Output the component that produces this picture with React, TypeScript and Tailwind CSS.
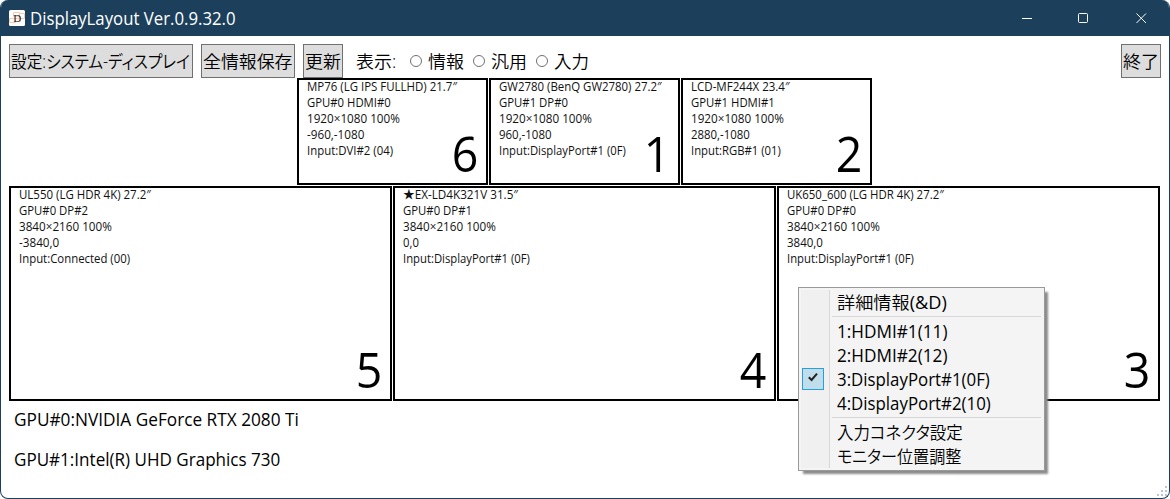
import { useLayoutEffect, useRef, useState } from "react";
import type { ReactNode } from "react";

/** Text condensed or stretched horizontally to an exact width in pixels. */
function Fit({ w, children, className = "" }: { w: number; children: ReactNode; className?: string }) {
  const ref = useRef<HTMLSpanElement>(null);
  const [scale, setScale] = useState(1);
  useLayoutEffect(() => {
    const natural = ref.current?.offsetWidth;
    if (natural) setScale(w / natural);
  }, [w]);
  return (
    <span className={`block ${className}`} style={{ width: w }}>
      <span ref={ref} className="inline-block origin-left whitespace-nowrap align-top" style={{ transform: `scaleX(${scale})` }}>
        {children}
      </span>
    </span>
  );
}

type Line = [string, number];

function Display({ id, lines, className }: { id: number; lines: Line[]; className: string }) {
  return (
    <div className={`relative border-2 border-black bg-white pl-2 ${className}`}>
      <div className="-mt-px text-[12px] leading-4 text-[#111]">
        {lines.map(([text, w]) => (
          <Fit key={text} w={w}>{text}</Fit>
        ))}
      </div>
      <span className="absolute right-[7px] bottom-[5px] origin-[90%_50%] scale-x-[0.93] text-[50px] leading-[50px]">{id}</span>
    </div>
  );
}

function Button({ children, className }: { children: ReactNode; className: string }) {
  return (
    <button className={`flex h-[34px] items-center border border-[#707070] bg-[#dddddd] pl-px text-left font-[350] ${className}`}>
      {children}
    </button>
  );
}

function Radio({ label, w, className }: { label: string; w: number; className: string }) {
  return (
    <label className={`flex items-center font-[350] ${className}`}>
      <span className="size-3 rounded-full border border-[#707070] bg-white" />
      <Fit w={w} className="ml-1.5">{label}</Fit>
    </label>
  );
}

function MenuItem({ text, w, checked, className = "" }: { text: ReactNode; w: number; checked?: boolean; className?: string }) {
  return (
    <div className={`flex h-6 items-center ${className}`}>
      <div className="flex w-[36px] shrink-0 pl-px">
        {checked && (
          <span className="flex size-[22px] items-center justify-center border border-[#26a0da] bg-[#c0ddeb]">
            <svg width="12" height="12" viewBox="0 0 12 12" className="-mt-1">
              <path d="M1.8 6.2 L4.6 9 L10 2.6" fill="none" stroke="#212121" strokeWidth="2" />
            </svg>
          </span>
        )}
      </div>
      <Fit w={w}>{text}</Fit>
    </div>
  );
}

function Separator() {
  return (
    <div className="flex h-[5px] items-center pr-px pl-[31px]">
      <div className="h-px w-full bg-[#d7d7d7]" />
    </div>
  );
}

const topRow: { id: number; lines: Line[] }[] = [
  { id: 6, lines: [["MP76 (LG IPS FULLHD) 21.7″", 150], ["GPU#0 HDMI#0", 84], ["1920×1080 100%", 92.5], ["-960,-1080", 57.5], ["Input:DVI#2 (04)", 86.5]] },
  { id: 1, lines: [["GW2780 (BenQ GW2780) 27.2″", 163], ["GPU#1 DP#0", 69], ["1920×1080 100%", 92.5], ["960,-1080", 52.5], ["Input:DisplayPort#1 (0F)", 127]] },
  { id: 2, lines: [["LCD-MF244X 23.4″", 99], ["GPU#1 HDMI#1", 84], ["1920×1080 100%", 92.5], ["2880,-1080", 59], ["Input:RGB#1 (01)", 89.5]] },
];

const bottomRow: { id: number; lines: Line[] }[] = [
  { id: 5, lines: [["UL550 (LG HDR 4K) 27.2″", 132], ["GPU#0 DP#2", 69], ["3840×2160 100%", 92.5], ["-3840,0", 40], ["Input:Connected (00)", 111]] },
  { id: 4, lines: [["★EX-LD4K321V 31.5″", 115], ["GPU#0 DP#1", 69], ["3840×2160 100%", 92.5], ["0,0", 16], ["Input:DisplayPort#1 (0F)", 127]] },
  { id: 3, lines: [["UK650_600 (LG HDR 4K) 27.2″", 157], ["GPU#0 DP#0", 69], ["3840×2160 100%", 92.5], ["3840,0", 35.5], ["Input:DisplayPort#1 (0F)", 127]] },
];

const gripDots = [[8, 0], [4, 4], [8, 4], [0, 8], [4, 8], [8, 8]];

export default function App() {
  return (
    <div className="h-[499px] w-[1170px] bg-white">
      <div className="relative flex h-full flex-col overflow-hidden rounded-lg border border-t-0 border-[#1c3f5b] bg-white font-['Open_Sans','Noto_Sans_CJK_JP',sans-serif] text-[17.5px] leading-6 text-black [font-feature-settings:'palt']">
        <header className="flex h-9 shrink-0 items-center bg-[#1c3f5b] pl-2 text-white">
          <svg width="16" height="16" viewBox="0 0 16 16">
            <rect width="16" height="16" rx="1.5" fill="#fff" />
            <path d="M4.5 2.5h6v4h-6zM10.5 3.5h5v5h-5zM.5 8.5h6v4h-6zM6.5 8.5h5v3h-5z" fill="none" stroke="#f9c9b6" />
            <text x="4.2" y="11.5" fontSize="11" fill="#222" fontFamily="Liberation Serif, serif">D</text>
          </svg>
          <Fit w={206} className="ml-[5px]">DisplayLayout Ver.0.9.32.0</Fit>
          <svg width="126" height="12" viewBox="0 0 126 12" className="mr-[21px] ml-auto" fill="none" stroke="#fff">
            <path d="M0 6.5h10" />
            <rect x="56.5" y="1.5" width="9" height="9" rx="1" />
            <path d="M114.5 1.5l9.5 9.5M124 1.5l-9.5 9.5" />
          </svg>
        </header>

        <main className="flex flex-col px-2 pt-2">
          <div className="flex h-[34px] items-center">
            <Button className="w-[184px]"><Fit w={179}>設定:システム-ディスプレイ</Fit></Button>
            <Button className="ml-2 w-[94px]"><Fit w={90}>全情報保存</Fit></Button>
            <Button className="ml-2 w-10"><Fit w={36}>更新</Fit></Button>
            <Fit w={40} className="ml-[13px] font-[350]">表示:</Fit>
            <Radio label="情報" w={36} className="ml-[14px]" />
            <Radio label="汎用" w={36} className="ml-[9px]" />
            <Radio label="入力" w={35} className="ml-[9px]" />
            <Button className="ml-auto w-10"><Fit w={36}>終了</Fit></Button>
          </div>
          <div className="flex gap-px pl-[288px]">
            {topRow.map((d) => <Display key={d.id} {...d} className="h-[107px] w-[191px]" />)}
          </div>
          <div className="mt-px flex gap-px">
            {bottomRow.map((d) => <Display key={d.id} {...d} className="h-[215px] w-[383px]" />)}
          </div>
          <div className="flex flex-col gap-4 pt-[6px] pl-[5px]">
            <Fit w={284.5}>GPU#0:NVIDIA GeForce RTX 2080 Ti</Fit>
            <Fit w={266}>GPU#1:Intel(R) UHD Graphics 730</Fit>
          </div>
        </main>

        <div className="absolute top-[287px] left-[797px] h-[184px] w-[247px] border border-[#999] bg-[#f4f4f4] p-[2px] shadow-[4px_4px_2px_-1px_#8c8c8c]">
          <div className="absolute inset-y-[2px] left-[2px] w-[29px] border-r border-[#d7d7d7] bg-[#f0f0f0]" />
          <div className="relative">
            <MenuItem text={<>詳細情報<span className="font-normal">(&amp;D)</span></>} w={110} className="font-[350]" />
            <Separator />
            <MenuItem text="1:HDMI#1(11)" w={110} />
            <MenuItem text="2:HDMI#2(12)" w={110} />
            <MenuItem text="3:DisplayPort#1(0F)" w={153} checked />
            <MenuItem text="4:DisplayPort#2(10)" w={154} />
            <Separator />
            <MenuItem text="入力コネクタ設定" w={126} className="font-[350]" />
            <MenuItem text="モニター位置調整" w={124} className="font-[350]" />
          </div>
        </div>

        <svg width="10" height="10" viewBox="0 0 10 10" className="absolute right-[2px] bottom-[2px]">
          {gripDots.map(([x, y]) => <rect key={`${x}-${y}`} x={x} y={y} width="2" height="2" fill="#bcc3d4" />)}
        </svg>
      </div>
    </div>
  );
}
